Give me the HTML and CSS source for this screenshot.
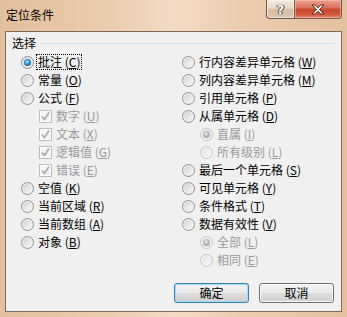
FILE: index.html
```html
<!DOCTYPE html>
<html><head><meta charset="utf-8"><link rel="stylesheet" href="styles.css"></head>
<body>
<div class="window">
  <div class="titlebar">
    <span class="title">定位条件</span>
    <div class="caption-btns">
      <span class="cap help">?</span>
      <span class="cap close"><svg width="14" height="11" viewBox="0 0 14 11"><path d="M1 1h3.2L7 3.8 9.8 1H13L8.6 5.5 13 10H9.8L7 7.2 4.2 10H1l4.4-4.5z" fill="#fff" stroke="#5a2418" stroke-width="1" stroke-linejoin="round"/></svg></span>
    </div>
  </div>
  <div class="client">
    <div class="group-head"><span class="group-label">选择</span><span class="group-line"></span></div>
    <div class="options">
      <div class="col">
        <div class="opt"><span class="radio on"></span><span class="txt focus">批注 (<u>C</u>)</span></div>
        <div class="opt"><span class="radio"></span><span class="txt">常量 (<u>O</u>)</span></div>
        <div class="opt"><span class="radio"></span><span class="txt">公式 (<u>F</u>)</span></div>
        <div class="opt indent dis"><span class="check"><svg width="11" height="11" viewBox="0 0 11 11"><path d="M2 5.5l2.5 3L9 1.5" fill="none" stroke="#a8a8a8" stroke-width="1.6"/></svg></span><span class="txt">数字 (<u>U</u>)</span></div>
        <div class="opt indent dis"><span class="check"><svg width="11" height="11" viewBox="0 0 11 11"><path d="M2 5.5l2.5 3L9 1.5" fill="none" stroke="#a8a8a8" stroke-width="1.6"/></svg></span><span class="txt">文本 (<u>X</u>)</span></div>
        <div class="opt indent dis"><span class="check"><svg width="11" height="11" viewBox="0 0 11 11"><path d="M2 5.5l2.5 3L9 1.5" fill="none" stroke="#a8a8a8" stroke-width="1.6"/></svg></span><span class="txt">逻辑值 (<u>G</u>)</span></div>
        <div class="opt indent dis"><span class="check"><svg width="11" height="11" viewBox="0 0 11 11"><path d="M2 5.5l2.5 3L9 1.5" fill="none" stroke="#a8a8a8" stroke-width="1.6"/></svg></span><span class="txt">错误 (<u>E</u>)</span></div>
        <div class="opt"><span class="radio"></span><span class="txt">空值 (<u>K</u>)</span></div>
        <div class="opt"><span class="radio"></span><span class="txt">当前区域 (<u>R</u>)</span></div>
        <div class="opt"><span class="radio"></span><span class="txt">当前数组 (<u>A</u>)</span></div>
        <div class="opt"><span class="radio"></span><span class="txt">对象 (<u>B</u>)</span></div>
      </div>
      <div class="col">
        <div class="opt"><span class="radio"></span><span class="txt">行内容差异单元格 (<u>W</u>)</span></div>
        <div class="opt"><span class="radio"></span><span class="txt">列内容差异单元格 (<u>M</u>)</span></div>
        <div class="opt"><span class="radio"></span><span class="txt">引用单元格 (<u>P</u>)</span></div>
        <div class="opt"><span class="radio"></span><span class="txt">从属单元格 (<u>D</u>)</span></div>
        <div class="opt indent dis"><span class="radio on"></span><span class="txt">直属 (<u>I</u>)</span></div>
        <div class="opt indent dis"><span class="radio"></span><span class="txt">所有级别 (<u>L</u>)</span></div>
        <div class="opt"><span class="radio"></span><span class="txt">最后一个单元格 (<u>S</u>)</span></div>
        <div class="opt"><span class="radio"></span><span class="txt">可见单元格 (<u>Y</u>)</span></div>
        <div class="opt"><span class="radio"></span><span class="txt">条件格式 (<u>T</u>)</span></div>
        <div class="opt"><span class="radio"></span><span class="txt">数据有效性 (<u>V</u>)</span></div>
        <div class="opt indent dis"><span class="radio on"></span><span class="txt">全部 (<u>L</u>)</span></div>
        <div class="opt indent dis"><span class="radio"></span><span class="txt">相同 (<u>E</u>)</span></div>
      </div>
    </div>
    <div class="buttons">
      <button class="btn default">确定</button>
      <button class="btn">取消</button>
    </div>
  </div>
</div>
</body></html>
```
FILE: styles.css
```css
html, body { margin: 0; padding: 0; }
body {
  width: 347px; height: 317px; overflow: hidden;
  font-family: "Noto Sans CJK SC", "Noto Sans", sans-serif;
  font-size: 12px; color: #000;
  background: #e6c4a3;
}
.window {
  width: 347px; height: 317px; box-sizing: border-box;
  padding: 0 5px 5px 5px;
  display: flex; flex-direction: column;
  background: linear-gradient(to right, #e3bf9c 0%, #ebcbab 30%, #f2dbc4 50%, #ecccad 70%, #e4c09e 100%);
}
.titlebar {
  height: 31px; flex: none;
  display: flex; justify-content: space-between; align-items: flex-start;
}
.title {
  margin: 7px 0 0 1px; line-height: 16px; font-size: 12px; color: #000;
}
.caption-btns { display: flex; }
.cap {
  height: 19px; box-sizing: border-box;
  display: flex; align-items: center; justify-content: center;
  border: 1px solid #6e5848; border-top: none;
}
.help {
  width: 28px; border-radius: 0 0 0 4px; border-right: none;
  background: linear-gradient(#f3e7dd 0%, #e9d7c8 45%, #d7bca6 55%, #dcc6b4 100%);
  box-shadow: inset 0 0 0 1px rgba(255,255,255,0.55);
  color: #fff; font-family: "DejaVu Sans", sans-serif; font-weight: bold; font-size: 13px;
  text-shadow: 0 0 1px #4a3a30, 0 0 1px #4a3a30, 1px 0 0 #4a3a30, -1px 0 0 #4a3a30;
}
.close {
  width: 48px; border-radius: 0 0 4px 0;
  background: linear-gradient(#e9a08c 0%, #da7560 40%, #c8442a 55%, #d4593c 80%, #e38a6c 100%);
  box-shadow: inset 0 0 0 1px rgba(255,210,190,0.5);
}
.client {
  flex: 1; background: #f0f0f0;
  border: 1px solid #7d6a58;
  display: flex; flex-direction: column;
}
.group-head {
  margin-top: 4px; height: 14px;
  display: flex; align-items: center;
  padding: 0 7px 0 6px;
}
.group-label { line-height: 14px; }
.group-line { flex: 1; height: 1px; background: #d5dfe5; margin-left: 4px; }
.options {
  margin-top: 3px; padding-left: 15px;
  display: grid; grid-template-columns: 161px 1fr;
}
.opt { height: 18px; display: flex; align-items: center; gap: 4px; }
.txt { line-height: 14px; white-space: nowrap; }
.txt u { text-decoration-thickness: 1px; text-underline-offset: 1px; }
.focus { outline: 1px dotted #000; outline-offset: 0; padding: 0 1px; margin-left: -1px; }
.indent { padding-left: 18px; }
.dis .txt { color: #9a9a9a; }
.radio {
  width: 13px; height: 13px; box-sizing: border-box; flex: none;
  border-radius: 50%; border: 1px solid #8f9090;
  background: linear-gradient(135deg, #c9cacb 0%, #e6e6e6 50%, #fbfbfb 100%);
  box-shadow: inset 0 0 0 1px #f2f2f2;
  display: flex; align-items: center; justify-content: center;
}
.radio.on::after {
  content: ""; width: 7px; height: 7px; border-radius: 50%;
  background: radial-gradient(circle at 45% 40%, #b9ecff 0%, #3aa2e6 35%, #12548e 75%, #0c3d6b 100%);
}
.dis .radio { border-color: #c4c5c5; background: linear-gradient(135deg, #e1e1e1, #f7f7f7); }
.dis .radio.on::after { background: radial-gradient(circle at 45% 40%, #eeeeee 0%, #b8b8b8 45%, #8c8c8c 100%); }
.check {
  width: 13px; height: 13px; box-sizing: border-box; flex: none;
  border: 1px solid #bcbcbc; background: #f4f4f4;
  box-shadow: inset 0 0 0 1px #fbfbfb;
  display: flex; align-items: center; justify-content: center;
}
.buttons {
  margin-top: 14px; padding-right: 7px;
  display: flex; justify-content: flex-end; gap: 10px;
}
.btn {
  width: 75px; height: 20px; padding: 0; margin: 0;
  font-family: inherit; font-size: 12px; color: #000; line-height: 16px;
  border: 1px solid #707070; border-radius: 3px;
  background: linear-gradient(#f2f2f2 0%, #ebebeb 48%, #dddddd 52%, #cfcfcf 100%);
  box-shadow: inset 0 0 0 1px #fbfbfb;
}
.btn.default {
  border-color: #3c7fb1;
  box-shadow: inset 0 0 0 1px #9ddcfa;
}
```
